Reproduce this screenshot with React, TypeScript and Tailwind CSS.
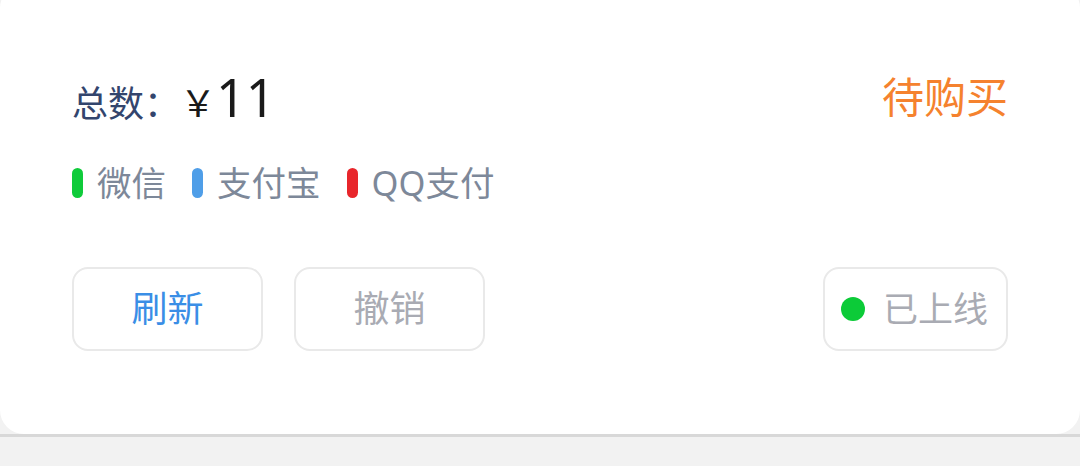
import React from 'react';

const channels = [
  { name: '微信', color: 'bg-[#0fcb3a]' },
  { name: '支付宝', color: 'bg-[#4f9ee8]' },
  { name: 'QQ支付', color: 'bg-[#e8262b]' },
];

function App() {
  return (
    <div
      className="min-h-screen bg-[#f2f2f2] overflow-hidden"
      style={{ fontFamily: '"Noto Sans", "Noto Sans CJK SC", sans-serif' }}
    >
      {/* order card */}
      <div className="-mt-[16px] bg-white rounded-[24px] pt-[83px] pb-[83px] px-[72px]">
        <div className="flex justify-between items-center h-[60px]">
          <div className="flex items-baseline">
            <span className="text-[36px] text-[#33456d] leading-none">总数：</span>
            <span className="text-[36px] text-[#1a1a1a] leading-none">￥</span>
            <span className="text-[52px] text-[#1a1a1a] leading-none">11</span>
          </div>
          <span className="text-[42px] text-[#f5822e] leading-none">待购买</span>
        </div>

        <div className="mt-[33px] flex items-center h-[46px] gap-[26px]">
          {channels.map((c) => (
            <div key={c.name} className="flex items-center gap-[14px]">
              <span className={`w-[11px] h-[30px] rounded-full ${c.color}`} />
              <span className="text-[34.5px] text-[#7d8899] leading-none">{c.name}</span>
            </div>
          ))}
        </div>

        <div className="mt-[61px] flex justify-between">
          <div className="flex gap-[31px]">
            <button className="w-[191px] h-[84px] border-2 border-[#e9e9e9] rounded-[16px] text-[36px] text-[#3a8ee6]">
              刷新
            </button>
            <button className="w-[191px] h-[84px] border-2 border-[#e9e9e9] rounded-[16px] text-[36px] text-[#a9abb3]">
              撤销
            </button>
          </div>
          <button className="w-[185px] h-[84px] border-2 border-[#e9e9e9] rounded-[16px] flex items-center pl-[16px] gap-[18px] text-[35px] text-[#a9abb3]">
            <span className="w-[24px] h-[24px] rounded-full bg-[#0ccb38]" />
            已上线
          </button>
        </div>
      </div>
      <div className="border-t-[3px] border-[#d8d8d8] h-[40px]" />
    </div>
  );
}

export default App;
